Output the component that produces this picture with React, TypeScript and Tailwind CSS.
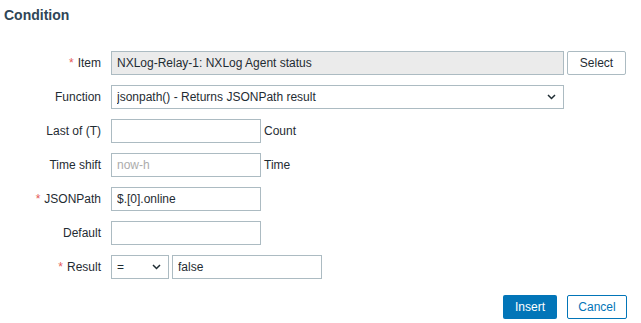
import React from 'react';

const Chevron: React.FC = () => (
  <svg width="9" height="6" viewBox="0 0 9 6" className="pointer-events-none absolute right-[8px] top-[9px]">
    <path d="M1 1l3.5 3.5L8 1" fill="none" stroke="#1f2c33" strokeWidth="1.5" />
  </svg>
);

const Label: React.FC<{ text: string; required?: boolean }> = ({ text, required }) => (
  <label className="w-[101px] shrink-0 text-right">
    {required && <span className="text-[#e45959] mr-[4px]">*</span>}
    {text}
  </label>
);

const inputCls =
  'h-[24px] border border-[#acbbc2] px-[5px] text-[12px] text-[#1f2c33] outline-none placeholder:text-[#acacac]';

export default function App() {
  return (
    <div className="w-[641px] h-[323px] bg-white font-['Liberation_Sans',Arial,sans-serif] text-[12px] text-[#1f2c33]">
      <h2 className="pt-[7px] pl-[4px] text-[14px] leading-[16px] font-bold text-[#2f4657]">Condition</h2>

      <div className="mt-[28px] flex flex-col gap-[10px]">
        <div className="flex items-center h-[24px]">
          <Label text="Item" required />
          <input
            readOnly
            value="NXLog-Relay-1: NXLog Agent status"
            className={`${inputCls} ml-[10px] w-[453px] bg-[#ebebeb]`}
          />
          <button className="ml-[3px] h-[24px] w-[59px] rounded-[2px] border border-[#acbbc2] bg-white text-[#1f2c33]">
            Select
          </button>
        </div>

        <div className="flex items-center h-[24px]">
          <Label text="Function" />
          <div className="relative ml-[10px]">
            <select className={`${inputCls} w-[453px] appearance-none bg-white pr-[20px]`} defaultValue="jsonpath">
              <option value="jsonpath">jsonpath() - Returns JSONPath result</option>
            </select>
            <Chevron />
          </div>
        </div>

        <div className="flex items-center h-[24px]">
          <Label text="Last of (T)" />
          <input className={`${inputCls} ml-[10px] w-[150px] bg-white`} />
          <span className="ml-[3px]">Count</span>
        </div>

        <div className="flex items-center h-[24px]">
          <Label text="Time shift" />
          <input placeholder="now-h" className={`${inputCls} ml-[10px] w-[150px] bg-white`} />
          <span className="ml-[3px]">Time</span>
        </div>

        <div className="flex items-center h-[24px]">
          <Label text="JSONPath" required />
          <input defaultValue="$.[0].online" className={`${inputCls} ml-[10px] w-[150px] bg-white`} />
        </div>

        <div className="flex items-center h-[24px]">
          <Label text="Default" />
          <input className={`${inputCls} ml-[10px] w-[150px] bg-white`} />
        </div>

        <div className="flex items-center h-[24px]">
          <Label text="Result" required />
          <div className="relative ml-[10px]">
            <select className={`${inputCls} w-[58px] appearance-none bg-white pr-[20px]`} defaultValue="=">
              <option value="=">=</option>
            </select>
            <Chevron />
          </div>
          <input defaultValue="false" className={`${inputCls} ml-[3px] w-[150px] bg-white`} />
        </div>

        <div className="mt-[6px] flex justify-end gap-[10px] pr-[14px]">
          <button className="h-[24px] w-[54px] rounded-[2px] bg-[#0275b8] text-white">Insert</button>
          <button className="h-[24px] w-[60px] rounded-[2px] border border-[#0275b8] bg-white text-[#0275b8]">
            Cancel
          </button>
        </div>
      </div>
    </div>
  );
}
